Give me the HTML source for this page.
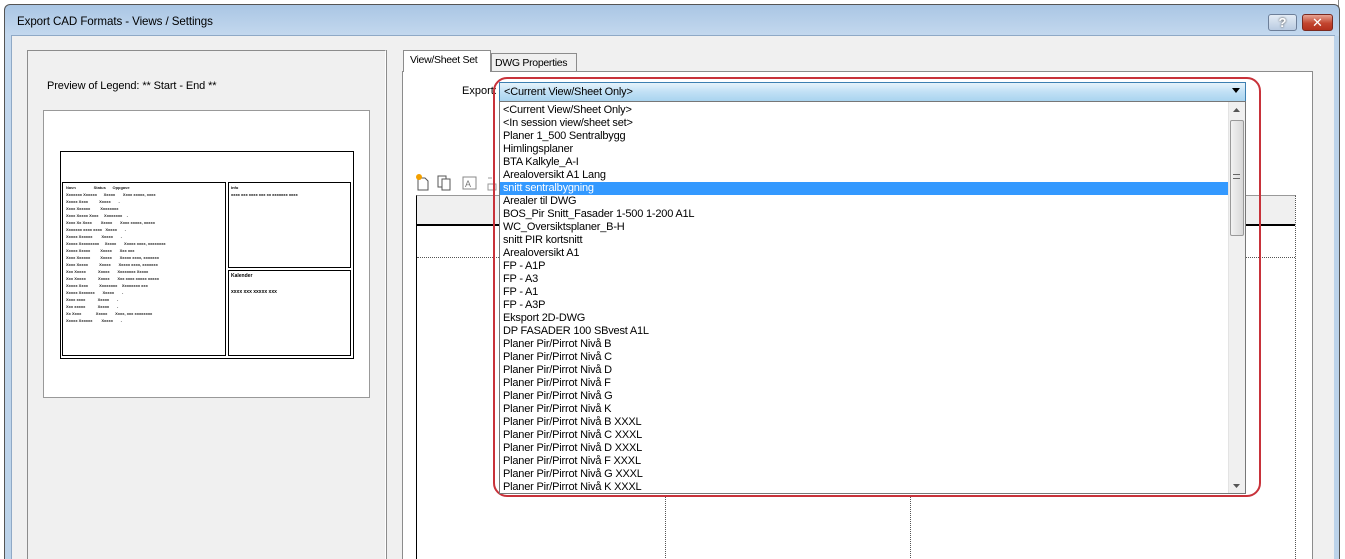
<!DOCTYPE html>
<html><head><meta charset="utf-8"><style>
*{margin:0;padding:0;box-sizing:border-box}
html{width:1345px;height:559px;overflow:hidden}
body{width:1345px;height:559px;overflow:hidden;background:#fff;font-family:"Liberation Sans","DejaVu Sans",sans-serif;font-size:11px;color:#000;position:relative}
.abs{position:absolute}
.lst div{padding-left:3px;letter-spacing:-0.2px;white-space:nowrap}
</style></head><body>
<div class="abs" style="left:1338px;top:0;width:7px;height:559px;background:#fff;border-left:1px solid #888"></div>
<div class="abs" style="left:4px;top:4px;width:1336px;height:555px;border:1px solid #555;border-bottom:none;border-radius:6px 6px 0 0;background:linear-gradient(#aac6e4,#c3d8ee 30px,#bcd3ea)"></div>
<div class="abs" style="left:17px;top:15px;font-size:11.6px;letter-spacing:-0.1px;color:#000">Export CAD Formats - Views / Settings</div>
<div class="abs" style="left:1268px;top:14px;width:29px;height:17px;border:1px solid #6d7f99;border-radius:3px;background:linear-gradient(#e4ecf5,#b9cbe1);color:#fff;font-weight:bold;text-align:center;font-size:13px;line-height:15px;text-shadow:0 0 2px #333">?</div>
<div class="abs" style="left:1302px;top:14px;width:31px;height:17px;border:1px solid #7a2a20;border-radius:3px;background:linear-gradient(#e8a493,#c2452f 55%,#b3301d);color:#fff;font-weight:bold;text-align:center;font-size:13px;line-height:15px">✕</div>
<div class="abs" style="left:11px;top:35px;width:1324px;height:524px;background:#f0f0f0;border:1px solid #8fa9c6;border-bottom:none"></div>
<div class="abs" style="left:27px;top:50px;width:359px;height:509px;border:1px solid #8c8c8c;border-right-color:#fff;border-bottom:none;box-shadow:1px 0 0 #8c8c8c"></div>
<div class="abs" style="left:47px;top:80px;letter-spacing:-0.1px">Preview of Legend: ** Start - End **</div>
<div class="abs" style="left:43px;top:110px;width:327px;height:288px;background:#fff;border:1px solid #999"></div>
<div class="abs" style="left:60px;top:151px;width:294px;height:208px;border:1px solid #000"></div>
<div class="abs" style="left:62px;top:182px;width:164px;height:174px;border:1px solid #000;font-size:4px;line-height:7px;padding:1px 3px;color:#222;font-weight:bold;white-space:pre">Navn                Status      Oppgave
Xxxxxxx Xxxxxx      Xxxxx       Xxxx xxxxx, xxxx
Xxxxx Xxxx          Xxxxx       -
Xxxx Xxxxxx         Xxxxxxxx
Xxxx Xxxxx Xxxx     Xxxxxxxx    -
Xxxx Xx Xxxx        Xxxxx       Xxxx xxxxx, xxxxx
Xxxxxxx xxxx xxxx   Xxxxx       -
Xxxxx Xxxxxx        Xxxxx       -
Xxxxx Xxxxxxxxx     Xxxxx       Xxxxx xxxx, xxxxxxxx
Xxxxx Xxxxx         Xxxxx       Xxx xxx
Xxxx Xxxxxx         Xxxxx       Xxxxx xxxx, xxxxxxx
Xxxx Xxxxx          Xxxxx       Xxxxx xxxx, xxxxxxx
Xxx Xxxxx           Xxxxx       Xxxxxxxx Xxxxx
Xxx Xxxxx           Xxxxx       Xxx xxxx xxxxx xxxxx
Xxxxx Xxxx          Xxxxxxxx    Xxxxxxxx xxx
Xxxxx Xxxxxxx       Xxxxx       -
Xxxx xxxx           Xxxxx       -
Xxx xxxxx           Xxxxx       -
Xx Xxxx             Xxxxx       Xxxx, xxx xxxxxxxx
Xxxxx Xxxxxx        Xxxxx       -</div>
<div class="abs" style="left:228px;top:182px;width:123px;height:86px;border:1px solid #000;font-size:4px;line-height:7px;padding:1px 2px;font-weight:bold">Info<br>xxxx xxx xxxx xxx xx xxxxxxx xxxx</div>
<div class="abs" style="left:228px;top:270px;width:123px;height:86px;border:1px solid #000;font-size:5px;line-height:8px;padding:1px 2px;font-weight:bold">Kalender<br><br>xxxx xxx xxxxx xxx</div>
<div class="abs" style="left:491px;top:53px;width:86px;height:19px;background:#f0f0f0;border:1px solid #8c8c8c;border-bottom:none;padding:3px 3px;white-space:nowrap;letter-spacing:-0.3px;font-size:10.5px">DWG Properties</div>
<div class="abs" style="left:402px;top:71px;width:911px;height:490px;background:#fff;border:1px solid #8c8c8c"></div>
<div class="abs" style="left:403px;top:50px;width:88px;height:22px;background:#fff;border:1px solid #8c8c8c;border-bottom:none;padding:3px 6px;white-space:nowrap;letter-spacing:-0.3px;font-size:10.5px">View/Sheet Set</div>
<div class="abs" style="left:462px;top:85px">Export:</div>
<svg class="abs" style="left:414px;top:172px" width="90" height="20"><path d="M4 6h7l3 3v9H4z" fill="#fff" stroke="#555"/><circle cx="5" cy="5" r="3" fill="#f3a000"/><rect x="24" y="4" width="8" height="11" fill="#fff" stroke="#555"/><rect x="28" y="7" width="8" height="11" fill="#fff" stroke="#555"/><rect x="49" y="5" width="13" height="12" fill="#fff" stroke="#888"/><text x="51" y="15" font-size="9" fill="#777" font-family="Liberation Sans">A</text><path d="M74 6h4M74 12h8v6h-8z" stroke="#999" fill="none"/></svg>
<div class="abs" style="left:416px;top:195px;width:880px;height:380px;border:1px solid #000;border-right:1px dotted #555;border-top-color:#999"></div>
<div class="abs" style="left:417px;top:196px;width:878px;height:30px;background:#f0f0f0;border-bottom:2px solid #000"></div>
<div class="abs" style="left:417px;top:257px;width:878px;border-top:1px dotted #555"></div>
<div class="abs" style="left:665px;top:228px;height:340px;border-left:1px dotted #555"></div>
<div class="abs" style="left:910px;top:228px;height:340px;border-left:1px dotted #555"></div>
<div class="abs" style="left:1334px;top:36px;width:5px;height:523px;background:#bcd3ea"></div>
<div class="abs" style="left:493px;top:77px;width:768px;height:420px;border:2px solid #c8323a;border-radius:14px"></div>
<div class="abs" style="left:499px;top:82px;width:747px;height:20px;border:1px solid #3c7fb1;background:linear-gradient(#e6f3fb,#c1e0f5 50%,#a9d4ef);padding:3px 4px;letter-spacing:-0.2px">&lt;Current View/Sheet Only&gt;</div>
<svg class="abs" style="left:1232px;top:88px" width="9" height="6"><path d="M0 0h8L4 5z" fill="#000"/></svg>
<div class="abs" style="left:499px;top:101px;width:747px;height:393px;background:#fff;border:1px solid #777;overflow:hidden">
<div class="lst" style="padding-top:2px;line-height:13px;width:728px">
<div>&lt;Current View/Sheet Only&gt;</div>
<div>&lt;In session view/sheet set&gt;</div>
<div>Planer 1_500 Sentralbygg</div>
<div>Himlingsplaner</div>
<div>BTA Kalkyle_A-I</div>
<div>Arealoversikt A1 Lang</div>
<div style="background:#3399ff;color:#fff">snitt sentralbygning</div>
<div>Arealer til DWG</div>
<div>BOS_Pir Snitt_Fasader 1-500 1-200 A1L</div>
<div>WC_Oversiktsplaner_B-H</div>
<div>snitt PIR kortsnitt</div>
<div>Arealoversikt A1</div>
<div>FP - A1P</div>
<div>FP - A3</div>
<div>FP - A1</div>
<div>FP - A3P</div>
<div>Eksport 2D-DWG</div>
<div>DP FASADER 100 SBvest A1L</div>
<div>Planer Pir/Pirrot Nivå B</div>
<div>Planer Pir/Pirrot Nivå C</div>
<div>Planer Pir/Pirrot Nivå D</div>
<div>Planer Pir/Pirrot Nivå F</div>
<div>Planer Pir/Pirrot Nivå G</div>
<div>Planer Pir/Pirrot Nivå K</div>
<div>Planer Pir/Pirrot Nivå B XXXL</div>
<div>Planer Pir/Pirrot Nivå C XXXL</div>
<div>Planer Pir/Pirrot Nivå D XXXL</div>
<div>Planer Pir/Pirrot Nivå F XXXL</div>
<div>Planer Pir/Pirrot Nivå G XXXL</div>
<div>Planer Pir/Pirrot Nivå K XXXL</div>
</div>
<div class="abs" style="left:728px;top:0;width:17px;height:391px;background:#f0f0f0;border-left:1px solid #e3e3e3"></div>
<div class="abs" style="left:730px;top:18px;width:14px;height:116px;border:1px solid #999;border-radius:2px;background:linear-gradient(90deg,#f2f2f2,#d8d8d8)"></div>
<div class="abs" style="left:733px;top:72px;width:7px;height:5px;border-top:1px solid #666;border-bottom:1px solid #666"></div>
<svg class="abs" style="left:733px;top:6px" width="7" height="4"><path d="M0 4L3.5 0 7 4z" fill="#555"/></svg>
<svg class="abs" style="left:733px;top:382px" width="7" height="4"><path d="M0 0L3.5 4 7 0z" fill="#555"/></svg>
</div>
</body></html>
